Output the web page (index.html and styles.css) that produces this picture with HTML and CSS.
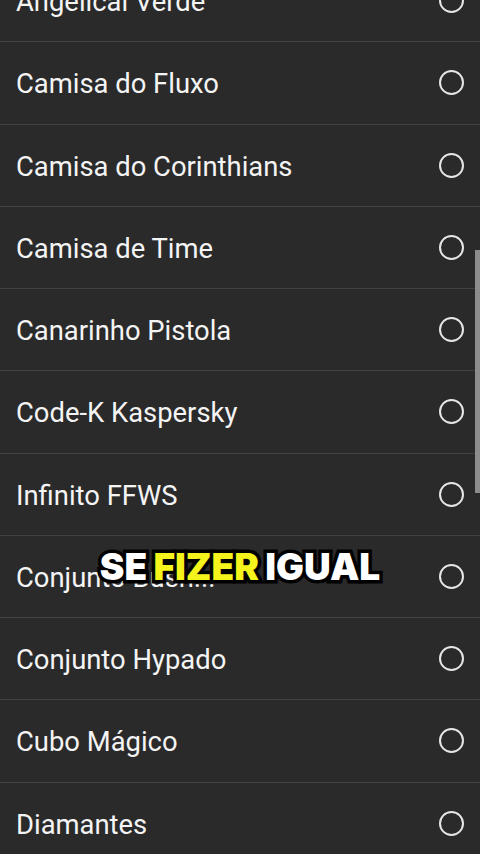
FILE: index.html
```html
<!DOCTYPE html>
<html lang="pt-BR">
<head>
  <meta charset="UTF-8">
  <meta name="viewport" content="width=device-width, initial-scale=1.0">
  <title>Escolher</title>
  <link rel="stylesheet" href="styles.css">
</head>
<body>
  <div class="screen">
    <ul class="options">
      <li class="option"><span>Angelical Verde</span><i class="radio"></i></li>
      <li class="option"><span>Camisa do Fluxo</span><i class="radio"></i></li>
      <li class="option"><span>Camisa do Corinthians</span><i class="radio"></i></li>
      <li class="option"><span>Camisa de Time</span><i class="radio"></i></li>
      <li class="option"><span>Canarinho Pistola</span><i class="radio"></i></li>
      <li class="option"><span>Code-K Kaspersky</span><i class="radio"></i></li>
      <li class="option"><span>Infinito FFWS</span><i class="radio"></i></li>
      <li class="option"><span>Conjunto Bush...</span><i class="radio"></i></li>
      <li class="option"><span>Conjunto Hypado</span><i class="radio"></i></li>
      <li class="option"><span>Cubo Mágico</span><i class="radio"></i></li>
      <li class="option"><span>Diamantes</span><i class="radio"></i></li>
    </ul>

    <div class="scrollbar"></div>

    <div class="caption">SE <em>FIZER</em> IGUAL</div>
  </div>
</body>
</html>
```

FILE: styles.css
```css
body {
  margin: 0;
  padding: 0;
  background: #2a2a2b;
  font-family: 'Roboto', 'Noto Sans', sans-serif;
  overflow: hidden;
}

.screen {
  position: relative;
  width: 480px;
  height: 854px;
  overflow: hidden;
  background: #2a2a2b;
}

.options {
  list-style: none;
  margin: -41px 0 0 0;
  padding: 0;
}

.option {
  box-sizing: border-box;
  display: flex;
  align-items: center;
  justify-content: space-between;
  height: 82.25px;
  padding: 3px 16px 0 16px;
  border-top: 1px solid #414142;
  color: #f4f4f4;
  font-size: 27.4px;
}

.option:first-child {
  border-top: none;
}

.radio {
  box-sizing: border-box;
  width: 25px;
  height: 25px;
  margin: -3px 0 0 0;
  border: 2px solid #e6e6e6;
  border-radius: 50%;
}

.scrollbar {
  position: absolute;
  top: 250px;
  right: 0;
  width: 5px;
  height: 243px;
  background: #8c8c8c;
}

.caption {
  position: absolute;
  top: 548px;
  left: 0;
  right: 0;
  text-align: center;
  font-family: 'Inter', 'Lato', sans-serif;
  font-weight: 900;
  font-size: 37px;
  line-height: 1;
  letter-spacing: 0;
  word-spacing: -1px;
  color: #fff;
  -webkit-text-stroke: 7px #000;
  paint-order: stroke fill;
  text-shadow: 2px 3px 0 #000;
}

.caption em {
  font-style: normal;
  color: #f4f41c;
}
```
